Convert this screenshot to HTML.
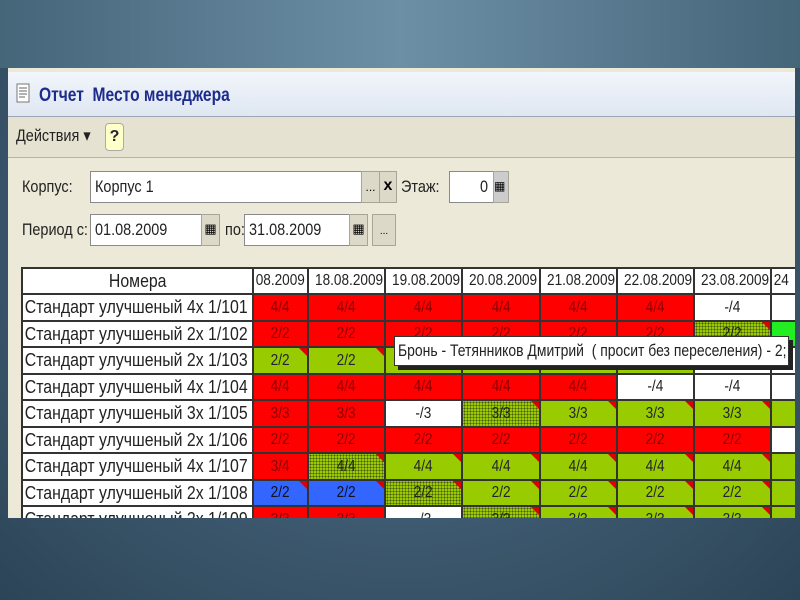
<!DOCTYPE html>
<html><head><meta charset="utf-8"><style>
body{margin:0;width:800px;height:600px;overflow:hidden;background:radial-gradient(ellipse at 50% 40%,#5a7a92 0%,#3e5a70 55%,#2c4457 100%);font-family:"Liberation Sans",sans-serif;position:relative}
.top{position:absolute;left:0;top:0;width:800px;height:68px;background:linear-gradient(90deg,#456579,#6d8fa6 50%,#456579)}
.panel{position:absolute;left:8px;top:68px;width:787px;height:450px;background:#ece9d8;overflow:hidden}
.title{position:absolute;left:0;top:4px;width:787px;height:44px;background:linear-gradient(#f2f5fb,#dfe7f2);border-bottom:1px solid #9aa6b8}
.title span{position:absolute;left:31px;top:13px;font-size:19px;font-weight:bold;color:#1c2c8c;transform:scaleX(.82);transform-origin:left;white-space:nowrap}
.tb{position:absolute;left:0;top:49px;width:787px;height:40px;background:#e6e2d2;border-bottom:1px solid #b8b4a2}
.a{position:absolute;font-size:17px;color:#222;transform:scaleX(.85);transform-origin:left;white-space:nowrap}
.inp{position:absolute;background:#fff;border:1px solid #8a8a8a;height:30px}
.btn{position:absolute;background:#ddd9c8;border:1px solid #a8a496;height:30px}
.c{position:absolute;box-sizing:border-box;border:2px solid #333;font-size:16px;text-align:center;overflow:hidden;white-space:nowrap}
.c span{display:inline-block;transform:scaleX(.85)}
.n{text-align:left;background:#fff;color:#222}
.n span{transform-origin:left;padding-left:2px}
.nm{font-size:18px}
.nm span{transform:scaleX(.88)}
.R{background:#f00;color:#8a0000}.G{background:#9c0;color:#223}.W{background:#fff;color:#222}.B{background:#36f;color:#112}
.D{background:#9c0 radial-gradient(circle,#4a5a10 40%,transparent 45%) 0 0/3px 3px;color:#222}
.L{background:#2e2}
.t:after{content:"";position:absolute;right:0;top:0;border-top:8px solid #d00;border-left:8px solid transparent}
</style></head><body>
<div class="top"></div>
<div class="panel">
<div class="title"><svg style="position:absolute;left:6px;top:10px" width="20" height="26"><rect x="3" y="2" width="12" height="18" fill="#fff" stroke="#777"/><path d="M5 6h8M5 9h8M5 12h8M5 15h6" stroke="#666"/></svg><span>Отчет&nbsp; Место менеджера</span></div>
<div class="tb"><div class="a" style="left:8px;top:9px">Действия ▾</div><div style="position:absolute;left:97px;top:6px;width:17px;height:26px;background:#ffffc8;border:1px solid #aaa;border-radius:4px;font-weight:bold;color:#223;text-align:center;line-height:26px">?</div></div>
<div class="a" style="left:14px;top:109px">Корпус:</div>
<div class="inp" style="left:82px;top:103px;width:270px"><div class="a" style="left:4px;top:5px">Корпус 1</div></div>
<div class="btn" style="left:353px;top:103px;width:17px;font-size:12px;text-align:center;line-height:30px">...</div>
<div class="btn" style="left:371px;top:103px;width:16px;font-weight:bold;text-align:center;line-height:28px">x</div>
<div class="a" style="left:393px;top:109px">Этаж:</div>
<div class="inp" style="left:441px;top:103px;width:43px"><div class="a" style="left:30px;top:5px">0</div></div>
<div class="btn" style="left:485px;top:103px;width:14px;background:#ccc;font-size:12px;line-height:28px">▦</div>
<div class="a" style="left:14px;top:152px">Период с:</div>
<div class="inp" style="left:82px;top:146px;width:110px"><div class="a" style="left:4px;top:5px">01.08.2009</div></div>
<div class="btn" style="left:193px;top:146px;width:17px;text-align:center;line-height:28px;font-size:13px">▦</div>
<div class="a" style="left:217px;top:152px">по:</div>
<div class="inp" style="left:236px;top:146px;width:104px"><div class="a" style="left:4px;top:5px">31.08.2009</div></div>
<div class="btn" style="left:341px;top:146px;width:17px;text-align:center;line-height:28px;font-size:13px">▦</div>
<div class="btn" style="left:364px;top:146px;width:22px;text-align:center;line-height:34px;font-size:10px">...</div>
<div id="g"></div>
<div style="position:absolute;left:386px;top:268px;width:390px;height:28px;background:#fff;border:1px solid #333;box-shadow:4px 4px 0 #222;font-size:17px;line-height:28px;padding-left:3px;white-space:nowrap;color:#222;overflow:hidden"><span style="display:inline-block;transform:scaleX(.82);transform-origin:left">Бронь - Тетянников Дмитрий&nbsp; ( просит без переселения) - 2;</span></div>
</div>
<script>
var rows=[["4x 1/101","R4/4 R4/4 R4/4 R4/4 R4/4 R4/4 W-/4 W"],["2x 1/102","R2/2 R2/2 R2/2 R2/2 R2/2 R2/2 D2/2 L"],["2x 1/103","G2/2 G2/2 G2/2 G2/2 G2/2 G2/2 W W"],["4x 1/104","R4/4 R4/4 R4/4 R4/4 R4/4 W-/4 W-/4 W"],["3x 1/105","R3/3 R3/3 W-/3 D3/3 G3/3 G3/3 G3/3 G"],["2x 1/106","R2/2 R2/2 R2/2 R2/2 R2/2 R2/2 R2/2 W"],["4x 1/107","R3/4 D4/4 G4/4 G4/4 G4/4 G4/4 G4/4 G"],["2x 1/108","B2/2 B2/2 D2/2 G2/2 G2/2 G2/2 G2/2 G"],["2x 1/109","R3/3 R3/3 W-/3 D3/3 G3/3 G3/3 G3/3 G"]];
var xs=[13,244,299,376,453,531,608,685,762,800];
var ys=[199,225,252,278,305,331,358,384,411,437,464];
function cell(cls,x0,x1,y0,y1,t){return '<div class="c '+cls+'" style="left:'+x0+'px;top:'+y0+'px;width:'+(x1-x0+2)+'px;height:'+(y1-y0+2)+'px;line-height:'+(y1-y0-2)+'px"><span>'+t+'</span></div>'}
var hd=["Номера","08.2009","18.08.2009","19.08.2009","20.08.2009","21.08.2009","22.08.2009","23.08.2009","24"],h="";
hd.forEach(function(t,i){h+=cell("W"+(i==1||i==8?" n":"")+(i==0?" nm":""),xs[i],xs[i+1],ys[0],ys[1],t)});
rows.forEach(function(r,i){h+=cell("n nm",xs[0],xs[1],ys[i+1],ys[i+2],"Стандарт улучшеный "+r[0]);
r[1].split(" ").forEach(function(s,j){var k=s[0],tri=(k=="G"||k=="B"||k=="D")&&j<7?" t":"";h+=cell(k+tri,xs[j+1],xs[j+2],ys[i+1],ys[i+2],s.slice(1));});});
document.getElementById("g").innerHTML=h;
</script>
</body></html>
